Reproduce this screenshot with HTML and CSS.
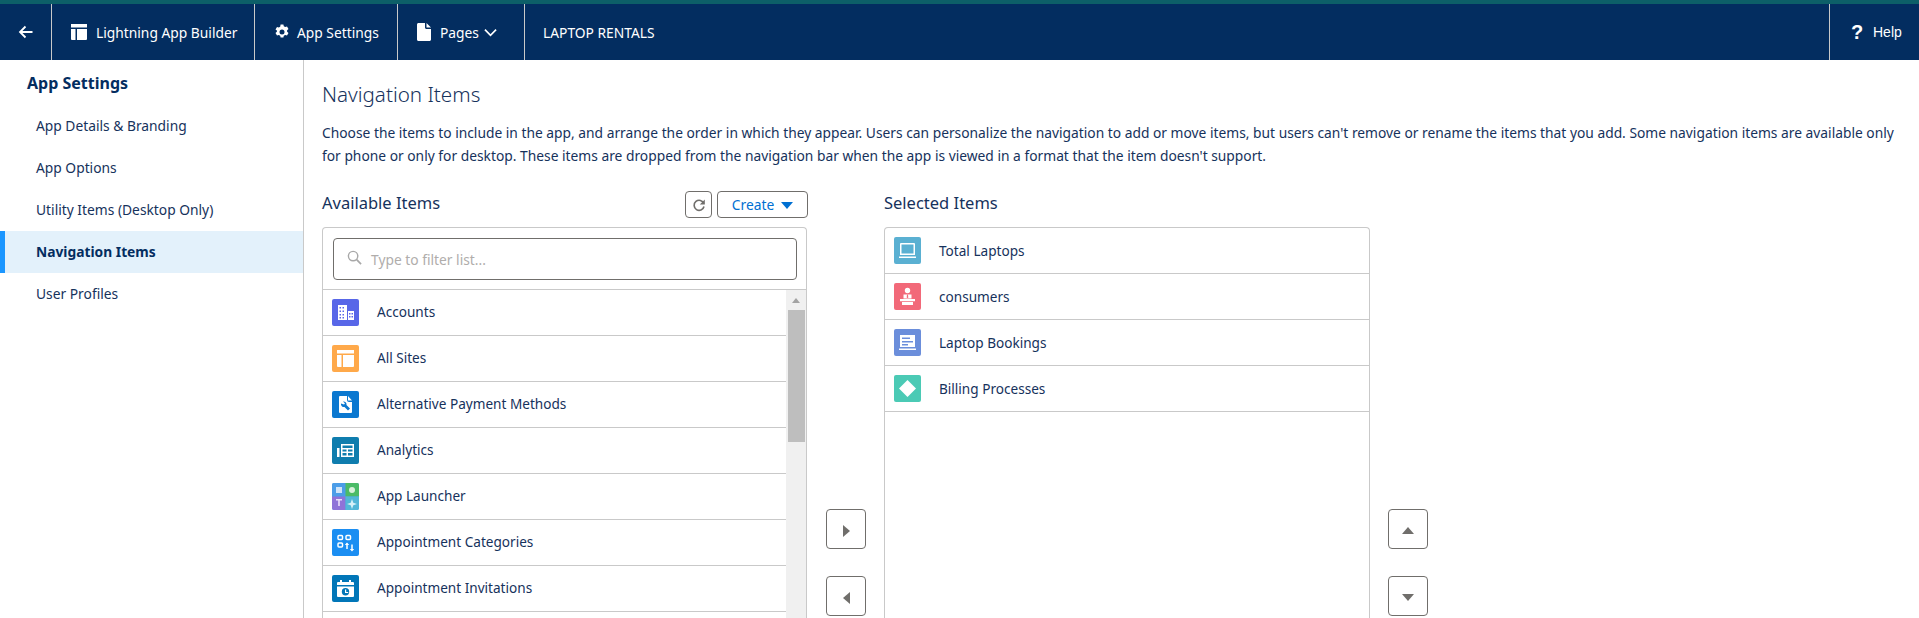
FILE: index.html
```html
<!DOCTYPE html>
<html lang="en">
<head>
<meta charset="utf-8">
<title>Lightning App Builder</title>
<link rel="stylesheet" href="styles.css">
</head>
<body>
<header class="topbar">
  <a class="seg seg-back"><svg class="hicon" viewBox="0 0 16 16"><path d="M14.500 8H2.500M7.500 2.500 2 8l5.500 5.500" fill="none" stroke="#fff" stroke-width="1.800"/></svg></a>
  <a class="seg seg-builder"><svg class="hicon-lg" viewBox="0 0 18 18"><path d="M1 1h16v3.500H1zM1 6h4.500v11H2a1 1 0 0 1-1-1zM7 6h10v10a1 1 0 0 1-1 1H7z" fill="#fff"/></svg><span>Lightning App Builder</span></a>
  <a class="seg seg-settings"><svg class="hicon" viewBox="0 0 16 16"><path fill="#fff" fill-rule="evenodd" d="M6.600 .5h2.800l.4 1.800 1.400.8 1.800-.6 1.500 2.500-1.400 1.200v1.600l1.400 1.200-1.500 2.500-1.800-.6-1.400.8-.4 1.800H6.600l-.4-1.800-1.400-.8-1.800.6-1.500-2.500 1.400-1.200V6.600L1.500 5.400 3 2.900l1.800.6 1.400-.8zM8 5.500a2.500 2.500 0 1 0 0 5 2.500 2.500 0 0 0 0-5z"/></svg><span>App Settings</span></a>
  <a class="seg seg-pages"><svg class="hicon-page" viewBox="0 0 14 18"><path fill="#fff" d="M1.500 0H8v4.500c0 .8.700 1.500 1.500 1.500H14v10.500c0 .8-.7 1.500-1.500 1.500h-11C.7 18 0 17.300 0 16.500v-15C0 .7.700 0 1.500 0zM9.500 0 14 4.500H9.500z"/></svg><span>Pages</span><svg class="chev" viewBox="0 0 14 9"><path d="M1 1.500 7 7.500l6-6" fill="none" stroke="#fff" stroke-width="1.800"/></svg></a>
  <a class="seg seg-app"><span>LAPTOP RENTALS</span></a>
  <span class="topbar-fill"></span>
  <a class="seg seg-help"><span class="qmark">?</span><span class="help-label">Help</span></a>
</header>

<div class="layout">
  <nav class="sidebar">
    <h2 class="side-title">App Settings</h2>
    <a class="side-item">App Details &amp; Branding</a>
    <a class="side-item">App Options</a>
    <a class="side-item">Utility Items (Desktop Only)</a>
    <a class="side-item is-active">Navigation Items</a>
    <a class="side-item">User Profiles</a>
  </nav>

  <main class="content">
    <h1 class="page-title">Navigation Items</h1>
    <p class="desc">Choose the items to include in the app, and arrange the order in which they appear. Users can personalize the navigation to add or move items, but users can't remove or rename the items that you add. Some navigation items are available only for phone or only for desktop. These items are dropped from the navigation bar when the app is viewed in a format that the item doesn't support.</p>

    <div class="dual">
      <section class="col">
        <div class="col-head">
          <h3 class="col-title">Available Items</h3>
          <div class="col-actions">
            <button class="btn btn-icon"><svg viewBox="0 0 16 16" class="refresh"><path d="M12.800 6.500A5 5 0 1 0 13 9.500" fill="none" stroke="#706e6b" stroke-width="1.600"/><path d="M13.800 2.500v5h-5z" fill="#706e6b"/></svg></button>
            <button class="btn btn-create">Create<svg class="caret" viewBox="0 0 12 7"><path d="M0 0h12L6 7z" fill="#0070d2"/></svg></button>
          </div>
        </div>
        <div class="box">
          <div class="filter-wrap">
            <div class="filter">
              <svg class="search" viewBox="0 0 16 16"><circle cx="6.500" cy="6.500" r="5" fill="none" stroke="#a8a8a8" stroke-width="1.500"/><path d="M10.300 10.300 15 15" stroke="#a8a8a8" stroke-width="1.800"/></svg>
              <span class="placeholder">Type to filter list...</span>
            </div>
          </div>
          <div class="list-wrap">
            <ul class="list">
              <li class="row"><span class="tile t-accounts"><svg viewBox="0 0 27 27"><path fill="#fff" fill-rule="evenodd" d="M6 6h9v15H6zM7.500 8v1.500H9V8zm3 0v1.500H12V8zm-3 3.500V13H9v-1.500zm3 0V13H12v-1.500zm-3 3.500v1.500H9V15zm3 0v1.500H12V15zm-3 3v1.500H9V18zm3 0v1.500H12V18z"/><path fill="#fff" fill-rule="evenodd" d="M16 12h6v9h-6zm1 2v1.500h1.500V14zm2.500 0v1.500H21V14zM17 17v1.500h1.500V17zm2.500 0v1.500H21V17z"/></svg></span><span class="label">Accounts</span></li>
              <li class="row"><span class="tile t-sites"><svg viewBox="0 0 27 27"><path fill="#fff" d="M5 5h17v3.500H5zM5 10h4.500v12H6a1 1 0 0 1-1-1zM11 10h11v11a1 1 0 0 1-1 1H11z"/></svg></span><span class="label">All Sites</span></li>
              <li class="row"><span class="tile t-payment"><svg viewBox="0 0 27 27"><path fill="#fff" fill-rule="evenodd" d="M8 5h7v4a2 2 0 0 0 2 2h3v10a1 1 0 0 1-1 1H8a1 1 0 0 1-1-1V6a1 1 0 0 1 1-1zm8 0 4 4.500h-4zM9 12.500a3 3 0 0 0 3.500 3.500l3.500 3.500 2-2-3.500-3.500a3 3 0 0 0-3.500-3.500l2 2-1 1z"/></svg></span><span class="label">Alternative Payment Methods</span></li>
              <li class="row"><span class="tile t-analytics"><svg viewBox="0 0 27 27"><path fill="#fff" fill-rule="evenodd" d="M9 7h13v13H9zm1.500 1.500V11h10V8.500zm0 4v2h4v-2zm5.500 0v2h4.500v-2zm-5.500 3.500v2.500h4V16zm5.500 0v2.500h4.500V16zM5 11h2.500v9H5z"/></svg></span><span class="label">Analytics</span></li>
              <li class="row"><span class="tile t-launcher"><svg viewBox="0 0 27 27"><rect width="13.500" height="13.500" fill="#4b9de8"/><rect x="13.500" width="13.500" height="13.500" fill="#4bbb67"/><rect y="13.500" width="13.500" height="13.500" fill="#8f73d8"/><rect x="13.500" y="13.500" width="13.500" height="13.500" fill="#52b7d8"/><path fill="#cfe4f8" d="M4 4h6v6H4z"/><circle cx="20" cy="7" r="3" fill="#d8f0dc"/><path fill="#eadffa" d="M4 16h6v1.500H7.800V23H6.200v-5.500H4z"/><path fill="#d6f1f8" d="M20 16l1.300 3.700L25 21l-3.700 1.300L20 26l-1.300-3.700L15 21l3.700-1.300z"/></svg></span><span class="label">App Launcher</span></li>
              <li class="row"><span class="tile t-categories"><svg viewBox="0 0 27 27"><g fill="none" stroke="#fff" stroke-width="1.500"><rect x="6" y="6.500" width="4.500" height="4" rx="1"/><rect x="14" y="6.500" width="4.500" height="4" rx="1"/><rect x="6" y="14" width="4.500" height="4" rx="1"/><path d="M15 20v-5.500M20 15.500V21"/></g><path fill="#fff" d="M12.800 16l2.200-2.500 2.200 2.500zM17.800 20l2.200 2.500 2.200-2.500z"/></svg></span><span class="label">Appointment Categories</span></li>
              <li class="row"><span class="tile t-invite"><svg viewBox="0 0 27 27"><path fill="#fff" fill-rule="evenodd" d="M8 5h2v2h7V5h2v2h2a1 1 0 0 1 1 1v2H5V8a1 1 0 0 1 1-1h2zM5 11.500h17V21a1 1 0 0 1-1 1H6a1 1 0 0 1-1-1zM13.500 13a3.700 3.700 0 1 0 0 7.400 3.700 3.700 0 0 0 0-7.400z"/><path fill="#fff" d="M13 14.500h1.200V17h2v1H13z"/></svg></span><span class="label">Appointment Invitations</span></li>
              <li class="row"></li>
            </ul>
            <div class="scrollbar">
              <span class="sb-up"></span>
              <span class="sb-thumb"></span>
            </div>
          </div>
        </div>
      </section>

      <div class="movers movers-mid">
        <button class="btn btn-move"><span class="tri tri-right"></span></button>
        <button class="btn btn-move"><span class="tri tri-left"></span></button>
      </div>

      <section class="col col-selected">
        <div class="col-head">
          <h3 class="col-title">Selected Items</h3>
        </div>
        <div class="box">
          <ul class="list">
            <li class="row"><span class="tile t-laptop"><svg viewBox="0 0 27 27"><path fill="#fff" fill-rule="evenodd" d="M7 6h13a1 1 0 0 1 1 1v11H6V7a1 1 0 0 1 1-1zm.500 1.500v9h12v-9z"/><path fill="#fff" d="M5 19.500h17V21H5z"/></svg></span><span class="label">Total Laptops</span></li>
            <li class="row"><span class="tile t-consumers"><svg viewBox="0 0 27 27"><circle cx="13.500" cy="7.500" r="2.700" fill="#fff"/><path fill="#fff" d="M9.500 11.500h8v4h-8zM6 16h15v2.200H6zM8 19h11v3H8z"/><path fill="#f26979" d="M13 11.500h1l.3 3-.8.800-.8-.8z"/></svg></span><span class="label">consumers</span></li>
            <li class="row"><span class="tile t-bookings"><svg viewBox="0 0 27 27"><path fill="#fff" fill-rule="evenodd" d="M6 6h15v12H6zm2 2.500V10h8V8.500zm0 3.500v1.500h11V12zm0 3v1.500h6V15zM5 19.500h17V21H5z"/></svg></span><span class="label">Laptop Bookings</span></li>
            <li class="row"><span class="tile t-billing"><svg viewBox="0 0 27 27"><path fill="#fff" d="M13.500 5 22 13.500 13.500 22 5 13.500z"/></svg></span><span class="label">Billing Processes</span></li>
          </ul>
        </div>
      </section>

      <div class="movers movers-end">
        <button class="btn btn-move"><span class="tri tri-up"></span></button>
        <button class="btn btn-move"><span class="tri tri-down"></span></button>
      </div>
    </div>
  </main>
</div>
</body>
</html>
```
FILE: styles.css
```css
* { box-sizing: border-box; }
html, body { margin: 0; height: 618px; overflow: hidden; }
body { background: #fff; font-family: "Noto Sans", "Open Sans", sans-serif; font-size: 13.800px; color: #16325c; }
ul { list-style: none; margin: 0; padding: 0; }
h1, h2, h3, p { margin: 0; font-weight: 400; }
button { font: inherit; padding: 0; background: #fff; }

.topbar { height: 60px; display: flex; align-items: stretch; background: #032d60; border-top: 4px solid #0d5f68; color: #fff; }
.seg { display: flex; align-items: center; border-right: 1px solid #c9c9c9; color: #fff; }
.seg-back { width: 52px; padding-left: 18px; }
.seg-builder { width: 203px; padding-left: 18px; gap: 8px; }
.seg-settings { width: 143px; padding-left: 19px; gap: 7px; }
.seg-pages { width: 127px; padding-left: 19px; gap: 9px; }
.seg-app { width: 130px; padding-left: 18px; border-right: 0; }
.topbar-fill { flex: 1; }
.seg-help { width: 90px; padding-left: 21px; border-right: 0; border-left: 1px solid #c9c9c9; gap: 10px; }
.hicon { width: 16px; height: 16px; }
.hicon-lg { width: 18px; height: 18px; }
.hicon-page { width: 14px; height: 18px; }
.chev { width: 13px; height: 9px; margin-left: -4px; }
.qmark { font: 700 20px "Liberation Sans", sans-serif; width: 12px; }
.help-label { font-family: "Liberation Sans", sans-serif; font-size: 14px; }

.layout { display: flex; height: 558px; }
.sidebar { width: 304px; flex: none; border-right: 1px solid #c9c9c9; padding-top: 9px; }
.side-title { font-size: 16px; font-weight: 700; color: #032d60; padding-left: 27px; height: 30px; line-height: 28px; margin-bottom: 6px; }
.side-item { display: flex; align-items: center; height: 42px; padding-left: 36px; padding-bottom: 2px; color: #16325c; }
.is-active { background: #e3f1fb; border-left: 5px solid #1b96ff; padding-left: 31px; font-weight: 700; color: #032d60; }

.content { flex: 1; min-width: 0; padding: 19px 18px 0 18px; }
.page-title { font-size: 20.600px; font-weight: 300; line-height: 30px; color: #16325c; }
.desc { margin-top: 12px; line-height: 23px; color: #16325c; }

.dual { display: flex; margin-top: 24px; align-items: flex-start; }
.col { width: 485px; flex: none; }
.col-selected { width: 486px; }
.col-head { height: 36px; display: flex; justify-content: space-between; align-items: flex-start; }
.col-title { font-size: 16.500px; line-height: 24px; color: #16325c; }
.col-actions { display: flex; gap: 5px; margin-right: -1px; }
.btn { border: 1px solid #706e6b; border-radius: 4px; display: flex; align-items: center; justify-content: center; }
.btn-icon { width: 27px; height: 27px; }
.refresh { width: 16px; height: 16px; }
.btn-create { width: 91px; height: 27px; color: #0070d2; gap: 7px; }
.caret { width: 12px; height: 7px; margin-top: 2px; }

.box { border: 1px solid #c9c9c9; border-bottom: 0; border-radius: 4px 4px 0 0; height: 400px; overflow: hidden; }
.filter-wrap { padding: 10px 9px 9px 10px; }
.filter { height: 42px; border: 1px solid #706e6b; border-radius: 4px; display: flex; align-items: center; padding-left: 13px; gap: 9px; }
.search { width: 15px; height: 15px; margin-top: -3px; }
.placeholder { color: #b0adab; }

.list-wrap { display: flex; border-top: 1px solid #c9c9c9; }
.list-wrap .list { flex: 1; min-width: 0; }
.list-wrap .label { padding-bottom: 2px; }
.row { height: 46px; display: flex; align-items: center; padding-left: 9px; border-bottom: 1px solid #c9c9c9; }
.tile { width: 27px; height: 27px; flex: none; border-radius: 2px; overflow: hidden; margin-right: 18px; display: block; }
.tile svg { display: block; width: 27px; height: 27px; }
.label { color: #16325c; font-size: 13.600px; }

.scrollbar { width: 20px; flex: none; background: #f0f0f0; padding: 0 2px; display: flex; flex-direction: column; align-items: center; height: 329px; }
.sb-up { width: 0; height: 0; margin: 8px 0 7px; border: 4.500px solid transparent; border-top: 0; border-bottom: 5px solid #a3a3a3; }
.sb-thumb { width: 17px; height: 132px; background: #bebebe; }

.t-accounts { background: #5867e8; }
.t-sites { background: #ffa94a; }
.t-payment { background: #0b78d0; }
.t-analytics { background: #0f7dae; }
.t-launcher { background: #4b9de8; }
.t-categories { background: #1b8ef2; }
.t-invite { background: #0176b8; }
.t-laptop { background: #5ab0d2; }
.t-consumers { background: #f26979; }
.t-bookings { background: #6b8edb; }
.t-billing { background: #4bcab5; }

.movers { flex: none; display: flex; flex-direction: column; gap: 27px; padding-top: 318px; }
.movers-mid { padding-left: 19px; padding-right: 18px; }
.movers-end { padding-left: 18px; }
.btn-move { width: 40px; height: 40px; }
.tri { width: 0; height: 0; display: block; margin-top: 3px; border: 6px solid transparent; }
.tri-right { border-right: 0; border-left: 7px solid #706e6b; }
.tri-left { border-left: 0; border-right: 7px solid #706e6b; }
.tri-up { border-top: 0; border-bottom: 7px solid #706e6b; }
.tri-down { border-bottom: 0; border-top: 7px solid #706e6b; }
```
